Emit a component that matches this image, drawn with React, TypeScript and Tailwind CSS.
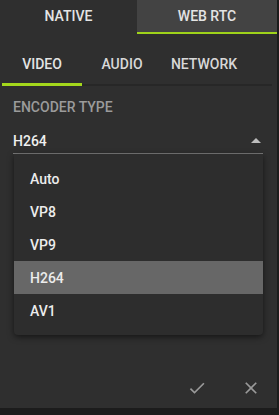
import React from 'react';

const items = ['Auto', 'VP8', 'VP9', 'H264', 'AV1'];

export default function App() {
  return (
    <div className="h-[415px] w-[279px] bg-[#1c1c1c] font-['Roboto',sans-serif]">
      <div className="relative h-[408px] w-[277px] bg-[#2f2f2f]">
        {/* top tabs */}
        <div className="flex h-[34px]">
          <div className="flex w-[137px] items-center justify-center pb-[2px] text-[14px] font-medium text-[#e4e4e4]">
            NATIVE
          </div>
          <div className="flex flex-1 items-center justify-center border-b-[2px] border-[#9fd31a] bg-[#434343] text-[14px] font-medium text-[#e4e4e4]">
            WEB RTC
          </div>
        </div>

        {/* sub tabs */}
        <div className="ml-[2px] mt-[12px] flex h-[40px] w-[270px] border-b-[2px] border-[#272727]">
          <div className="-mb-[2px] flex w-[80px] items-center justify-center border-b-[3px] border-[#a4d81c] text-[14px] font-medium text-[#e4e4e4]">
            VIDEO
          </div>
          <div className="flex w-[80px] items-center justify-center pb-[2px] text-[14px] font-medium text-[#d8d8d8]">
            AUDIO
          </div>
          <div className="flex w-[84px] items-center justify-center pb-[2px] text-[14px] font-medium text-[#d8d8d8]">
            NETWORK
          </div>
        </div>

        {/* encoder select */}
        <div className="px-[13px] pt-[13px]">
          <div className="text-[14px] font-medium leading-[16px] text-[#9b9b9b]">ENCODER TYPE</div>
          <div className="mt-[18px] flex w-[250px] items-center justify-between border-b border-[#7a7a7a] pb-[4px]">
            <span className="text-[14px] font-medium leading-[16px] text-[#f0f0f0]">H264</span>
            <svg width="10" height="6" viewBox="0 0 10 6" className="mr-[2px]">
              <path d="M0 5 L5 0 L10 5 Z" fill="#bdbdbd" />
            </svg>
          </div>
        </div>

        {/* dropdown menu */}
        <div className="absolute left-[14px] top-[154px] w-[249px] rounded-b-[4px] bg-[#2d2d2d] py-[8px] shadow-[0_2px_6px_rgba(0,0,0,0.55)]">
          {items.map((it) => (
            <div
              key={it}
              className={
                'flex h-[33px] items-center px-[16px] pt-[1px] text-[14px] font-medium text-[#ececec] ' +
                (it === 'H264' ? 'bg-[#676767]' : '')
              }
            >
              {it}
            </div>
          ))}
        </div>

        {/* actions */}
        <div className="absolute bottom-[10px] right-[16px] flex items-center gap-[34px]">
          <svg width="20" height="20" viewBox="0 0 24 24">
            <path d="M9 16.17L4.83 12l-1.42 1.41L9 19 21 7l-1.41-1.41z" fill="#9a9a9a" />
          </svg>
          <svg width="20" height="20" viewBox="0 0 24 24">
            <path
              d="M19 6.41L17.59 5 12 10.59 6.41 5 5 6.41 10.59 12 5 17.59 6.41 19 12 13.41 17.59 19 19 17.59 13.41 12z"
              fill="#9a9a9a"
            />
          </svg>
        </div>
      </div>
    </div>
  );
}
